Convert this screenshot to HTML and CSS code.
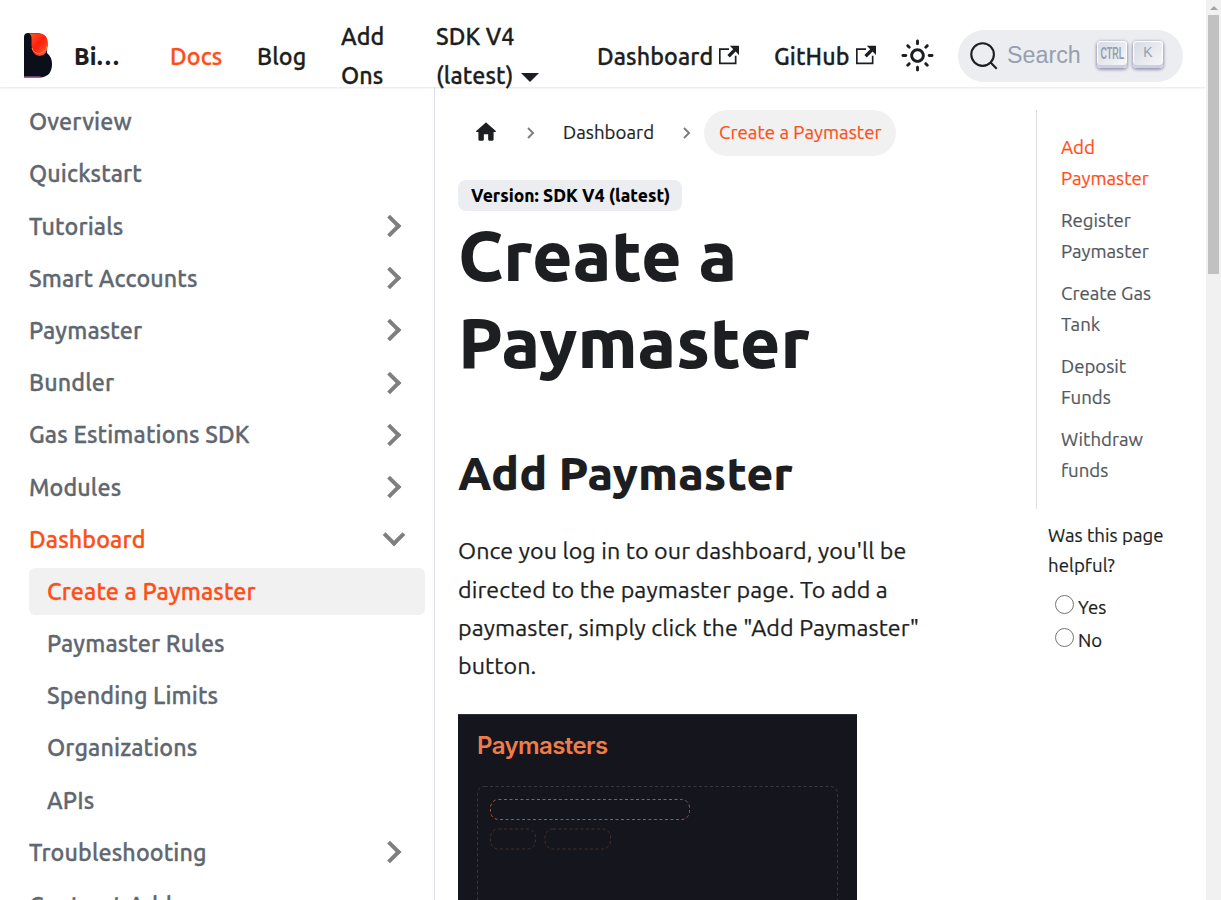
FILE: index.html
```html
<!DOCTYPE html>
<html lang="en">
<head>
<meta charset="utf-8">
<title>Create a Paymaster</title>
<link rel="stylesheet" href="styles.css">
</head>
<body>
<div class="window">
<div class="page">
  <header class="navbar">
    <a class="brand">
      <svg class="logo" viewBox="0 0 29 45" width="29" height="45">
        <defs>
          <linearGradient id="drop" x1="0" y1="0" x2="1" y2="1"><stop offset="0" stop-color="#ff5a2a"/><stop offset=".5" stop-color="#ff1f0a"/><stop offset="1" stop-color="#ff6a3c"/></linearGradient>
        </defs>
        <path d="M0 4Q0 0 4 0H14Q24 2 23 14V20Q28 24 28 31Q28 43 17 44.500H0Z" fill="#0b0f1a"/>
        <path d="M0 43.800H17" stroke="#a04a90" stroke-width="1"/>
        <path d="M4.500 .3H14Q24 0 24 12Q23 23 15.500 23Q7.500 22 7.500 12V5Q7 1 4.500 .3Z" fill="url(#drop)"/>
        <path d="M8 15Q10 21 16 20.500Q22 19 23 13" fill="none" stroke="#ff8156" stroke-width="1"/>
      </svg>
      <b class="brand-name">Bi…</b>
    </a>
    <nav class="links">
      <a class="docs active">Docs</a>
      <a class="blog">Blog</a>
      <a class="addons">Add<br>Ons</a>
      <a class="sdk">SDK V4<br>(latest)<i class="caret"></i></a>
    </nav>
    <nav class="links-right">
      <a class="dash">Dashboard<svg class="ext" viewBox="0 0 24 24" width="24" height="24"><path fill="currentColor" d="M21 13v10h-21v-19h12v2h-10v15h17v-8h2zm3-12h-10.988l4.035 4-6.977 7.070 2.828 2.828 6.977-7.070 4.125 4.172v-11z"/></svg></a>
      <a class="git">GitHub<svg class="ext" viewBox="0 0 24 24" width="24" height="24"><path fill="currentColor" d="M21 13v10h-21v-19h12v2h-10v15h17v-8h2zm3-12h-10.988l4.035 4-6.977 7.070 2.828 2.828 6.977-7.070 4.125 4.172v-11z"/></svg></a>
    </nav>
    <svg class="sun" viewBox="0 0 24 24" width="35" height="35"><path fill="currentColor" d="M12,9c1.650,0,3,1.350,3,3s-1.350,3-3,3s-3-1.350-3-3S10.350,9,12,9 M12,7c-2.760,0-5,2.240-5,5s2.240,5,5,5s5-2.240,5-5 S14.760,7,12,7L12,7z M2,13l2,0c0.550,0,1-0.450,1-1s-0.450-1-1-1l-2,0c-0.550,0-1,0.450-1,1S1.450,13,2,13z M20,13l2,0c0.550,0,1-0.450,1-1 s-0.450-1-1-1l-2,0c-0.550,0-1,0.450-1,1S19.450,13,20,13z M11,2v2c0,0.550,0.450,1,1,1s1-0.450,1-1V2c0-0.550-0.450-1-1-1S11,1.450,11,2z M11,20v2c0,0.550,0.450,1,1,1s1-0.450,1-1v-2c0-0.550-0.450-1-1-1C11.450,19,11,19.450,11,20z M5.990,4.580c-0.390-0.390-1.030-0.390-1.410,0 c-0.390,0.390-0.390,1.030,0,1.410l1.060,1.060c0.390,0.390,1.030,0.390,1.410,0s0.390-1.030,0-1.410L5.990,4.580z M18.360,16.950 c-0.390-0.390-1.030-0.390-1.410,0c-0.390,0.390-0.390,1.030,0,1.410l1.060,1.060c0.390,0.390,1.030,0.390,1.410,0c0.390-0.390,0.390-1.030,0-1.410 L18.360,16.950z M19.420,5.990c0.390-0.390,0.390-1.030,0-1.410c-0.390-0.390-1.030-0.390-1.410,0l-1.060,1.060c-0.390,0.390-0.390,1.030,0,1.410 s1.030,0.390,1.410,0L19.420,5.990z M7.050,18.360c0.390-0.390,0.390-1.030,0-1.410c-0.390-0.390-1.030-0.390-1.410,0l-1.060,1.060 c-0.390,0.390-0.390,1.030,0,1.410s1.030,0.390,1.410,0L7.050,18.360z"/></svg>
    <button class="search">
      <svg viewBox="0 0 20 20" width="30" height="30"><path d="M14.386 14.386l4.088 4.088-4.088-4.088c-2.942 2.942-7.711 2.942-10.653 0s-2.942-7.711 0-10.653 7.711-2.942 10.653 0 2.942 7.711 0 10.653z" stroke="currentColor" stroke-width="1.400" fill="none" stroke-linecap="round"/></svg>
      <span class="ph">Search</span>
      <kbd><span class="ctrl">CTRL</span></kbd><kbd><span>K</span></kbd>
    </button>
  </header>
  <div class="body">
    <aside class="sidebar">
      <a class="item"><span>Overview</span></a>
      <a class="item"><span>Quickstart</span></a>
      <a class="item more"><span>Tutorials</span></a>
      <a class="item more"><span>Smart Accounts</span></a>
      <a class="item more"><span>Paymaster</span></a>
      <a class="item more"><span>Bundler</span></a>
      <a class="item more"><span>Gas Estimations SDK</span></a>
      <a class="item more"><span>Modules</span></a>
      <a class="item more open"><span>Dashboard</span></a>
      <a class="item sub current"><span>Create a Paymaster</span></a>
      <a class="item sub"><span>Paymaster Rules</span></a>
      <a class="item sub"><span>Spending Limits</span></a>
      <a class="item sub"><span>Organizations</span></a>
      <a class="item sub"><span>APIs</span></a>
      <a class="item more"><span>Troubleshooting</span></a>
      <a class="item last"><span>Contract Addresses</span></a>
    </aside>
    <main class="content">
      <nav class="crumbs">
        <svg class="home" viewBox="0 0 24 24" width="26" height="26"><path fill="currentColor" d="M10 19v-5h4v5c0 .55.45 1 1 1h3c.55 0 1-.45 1-1v-7h1.700c.46 0 .68-.57.33-.87L12.670 3.600c-.38-.34-.96-.34-1.340 0l-8.360 7.530c-.34.3-.13.87.33.87H5v7c0 .55.45 1 1 1h3c.55 0 1-.45 1-1z"/></svg>
        <svg class="sep" viewBox="0 0 10 14" width="10" height="14"><path d="M2 2l5 5-5 5" fill="none" stroke="#7f7f7f" stroke-width="2"/></svg>
        <a class="crumb">Dashboard</a>
        <svg class="sep2" viewBox="0 0 10 14" width="10" height="14"><path d="M2 2l5 5-5 5" fill="none" stroke="#7f7f7f" stroke-width="2"/></svg>
        <span class="pill">Create a Paymaster</span>
      </nav>
      <span class="badge">Version: SDK V4 (latest)</span>
      <h1>Create a<br>Paymaster</h1>
      <h2>Add Paymaster</h2>
      <p>Once you log in to our dashboard, you'll be<br>directed to the paymaster page. To add a<br>paymaster, simply click the "Add Paymaster"<br>button.</p>
      <figure class="shot">
        <div class="shot-title">Paymasters</div>
        <svg class="panel" width="399" height="120" viewBox="0 0 399 120" fill="none" stroke-dasharray="3 2.500">
          <rect x="19.500" y="2.500" width="360" height="200" rx="7" stroke="#383842"/>
          <rect x="32.500" y="15.500" width="199" height="20" rx="8" stroke="#a85538"/>
          <rect x="32.500" y="45" width="45" height="20" rx="8" stroke="#4a2f23"/>
          <rect x="87" y="45" width="65.500" height="20" rx="8" stroke="#4a2f23"/>
        </svg>
      </figure>
    </main>
    <aside class="right">
      <ul class="toc">
        <li class="on">Add<br>Paymaster</li>
        <li>Register<br>Paymaster</li>
        <li>Create Gas<br>Tank</li>
        <li>Deposit<br>Funds</li>
        <li>Withdraw<br>funds</li>
      </ul>
      <div class="helpful">
        <div>Was this page<br>helpful?</div>
        <label><i></i>Yes</label>
        <label><i></i>No</label>
      </div>
    </aside>
  </div>
</div>
<div class="scrollbar"><i class="up"></i><i class="thumb"></i></div>
</div>
</body>
</html>
```

FILE: styles.css
```css
*, *::after { box-sizing: border-box; }
body { margin: 0; background: #fff; color: #1c1e21; font-family: "Ubuntu", "Noto Sans", sans-serif; font-size: 23.270px; overflow: hidden; }
.window { display: flex; width: 1221px; height: 900px; overflow: hidden; }
.page { width: 1206px; height: 900px; display: flex; flex-direction: column; }
.scrollbar { width: 15px; background: #f1f1f1; display: flex; flex-direction: column; align-items: center; }
.up { margin-top: 6px; border: 4px solid transparent; border-top: 0; border-bottom: 4px solid #a3a3a3; }
.thumb { margin-top: 5px; width: 11px; height: 259px; background: #c1c1c1; }

.navbar { height: 87px; flex: none; display: flex; align-items: center; padding: 24px 23px 0 24px; box-shadow: 0 1px 2px rgba(0,0,0,.1); font-weight: 500; line-height: 39px; white-space: nowrap; }
.brand { display: flex; align-items: center; width: 146px; }
.logo { margin-right: 21px; }
.brand-name { font-weight: 800; padding-top: 1px; }
.links, .links-right { display: flex; align-items: center; -webkit-text-stroke: .3px; letter-spacing: .1px; }
.docs { width: 87px; color: #ff4e17; }
.docs, .blog, .dash, .git { padding-top: 1px; }
.blog { width: 84px; }
.addons { width: 95px; }
.sdk { width: 161px; }
.caret { display: inline-block; margin-left: 8px; border: 9px solid transparent; border-top: 9px solid; border-bottom: 0; vertical-align: 2px; }
.dash { width: 177px; }
.git { width: 126px; }
.ext { width: 20px; height: 20px; margin-left: 6px; }
.sun { flex: none; }
.search { flex: none; margin-left: 23px; width: 225px; height: 52px; border: 0; border-radius: 26px; background: #ebedf0; display: flex; align-items: center; padding: 0 20px 0 11px; color: #1c1e21; }
.search svg { flex: none; }
.ph { font: 23.270px/28px "Liberation Sans", sans-serif; color: #969faf; margin: -2px 0 0 8px; width: 90px; flex: none; text-align: left; }
kbd { width: 30px; height: 27px; margin: -2px 6px 0 0; flex: none; border: 0; border-radius: 4px; background: linear-gradient(-225deg, #d5dbe4, #f8f8f8); box-shadow: inset 0 -3px 0 0 #cdcde6, inset 0 0 1px 1px #fff, 0 1px 3px 1px rgba(30,35,90,.4); display: flex; justify-content: center; font: 14px/23px "Liberation Sans", sans-serif; color: #969faf; }
.ctrl { font-size: 16px; line-height: 25px; font-weight: 700; transform: scaleX(.56); }

.body { flex: 1; display: flex; min-height: 0; }
.sidebar { width: 435px; flex: none; border-right: 1px solid #dadde1; padding: 11.200px 9px 0 29px; display: flex; flex-direction: column; gap: 5.190px; overflow: hidden; }
.item { flex: none; height: 47px; line-height: 46px; border-radius: 6px; display: flex; justify-content: space-between; align-items: center; font-weight: 500; color: #606770; -webkit-text-stroke: .3px; letter-spacing: .12px; }
.item span { margin-top: -1px; }
.item.last { margin-top: 1px; }
.sub { padding-left: 18px; }
.open, .item.current, .on, .pill { color: #ff4e17; }
.current { background: #f1f1f1; }
.more { padding-right: 26px; }
.more::after { content: ""; width: 16px; height: 16px; border: solid #7f7f7f; border-width: 4px 4px 0 0; transform: translateX(-1px) rotate(45deg); }
.open { padding-right: 23px; }
.open::after { transform: translateY(-4px) rotate(135deg); }

.content { width: 590px; flex: none; padding: 23px 0 0 23px; overflow: hidden; }
.crumbs { height: 46px; display: flex; align-items: center; font-size: 18.620px; line-height: 45px; white-space: nowrap; -webkit-text-stroke: .2px; letter-spacing: .05px; }
.home { margin: -3px 0 0 15px; }
.sep { margin-left: 27px; }
.crumb { margin-left: 27px; margin-top: -1px; width: 91px; }
.sep2 { margin-left: 28px; }
.pill { margin-left: 12px; width: 192px; height: 46px; padding-left: 15px; border-radius: 23px; background: #f1f1f1; }
.badge { display: block; margin-top: 24px; width: 224px; height: 31px; line-height: 31px; border-radius: 8px; background: #ebedf0; color: #000; font-size: 17.450px; font-weight: 800; padding-left: 13px; white-space: nowrap; }
h1 { margin: 1px 0 0; font-size: 69.800px; line-height: 87px; font-weight: 800; }
h2 { margin: 57px 0 0; font-size: 46.540px; line-height: 60px; font-weight: 800; }
p { margin: 28.200px 0 0; line-height: 38.330px; white-space: nowrap; -webkit-text-stroke: .25px; letter-spacing: .09px; }
.shot { margin: 29px 0 0; width: 399px; height: 300px; background: #15151e; border-top: 1px solid #2a3038; color: #f07c48; }
.shot-title { padding: 14px 0 0 19px; font: 600 24px/34px Inter, sans-serif; letter-spacing: -.6px; height: 69px; }
.panel { display: block; }

.right { padding: 23px 0 0 11px; }
.toc { list-style: none; margin: 0; height: 399px; border-left: 1px solid #dadde1; padding: 23px 0 0 24px; font-size: 18.620px; line-height: 30.800px; color: #525860; display: flex; flex-direction: column; gap: 11.350px; -webkit-text-stroke: .2px; }
.toc .on { color: #ff4e17; }
.helpful { padding: 12px 0 0 12px; font-size: 18.620px; line-height: 30px; -webkit-text-stroke: .2px; letter-spacing: .05px; }
.helpful label { display: flex; align-items: center; height: 33px; padding-left: 7px; }
.helpful div + label { margin-top: 10px; }
.helpful i { width: 19px; height: 19px; border: 1px solid #767676; border-radius: 50%; margin: -7px 4px 0 0; }
```
